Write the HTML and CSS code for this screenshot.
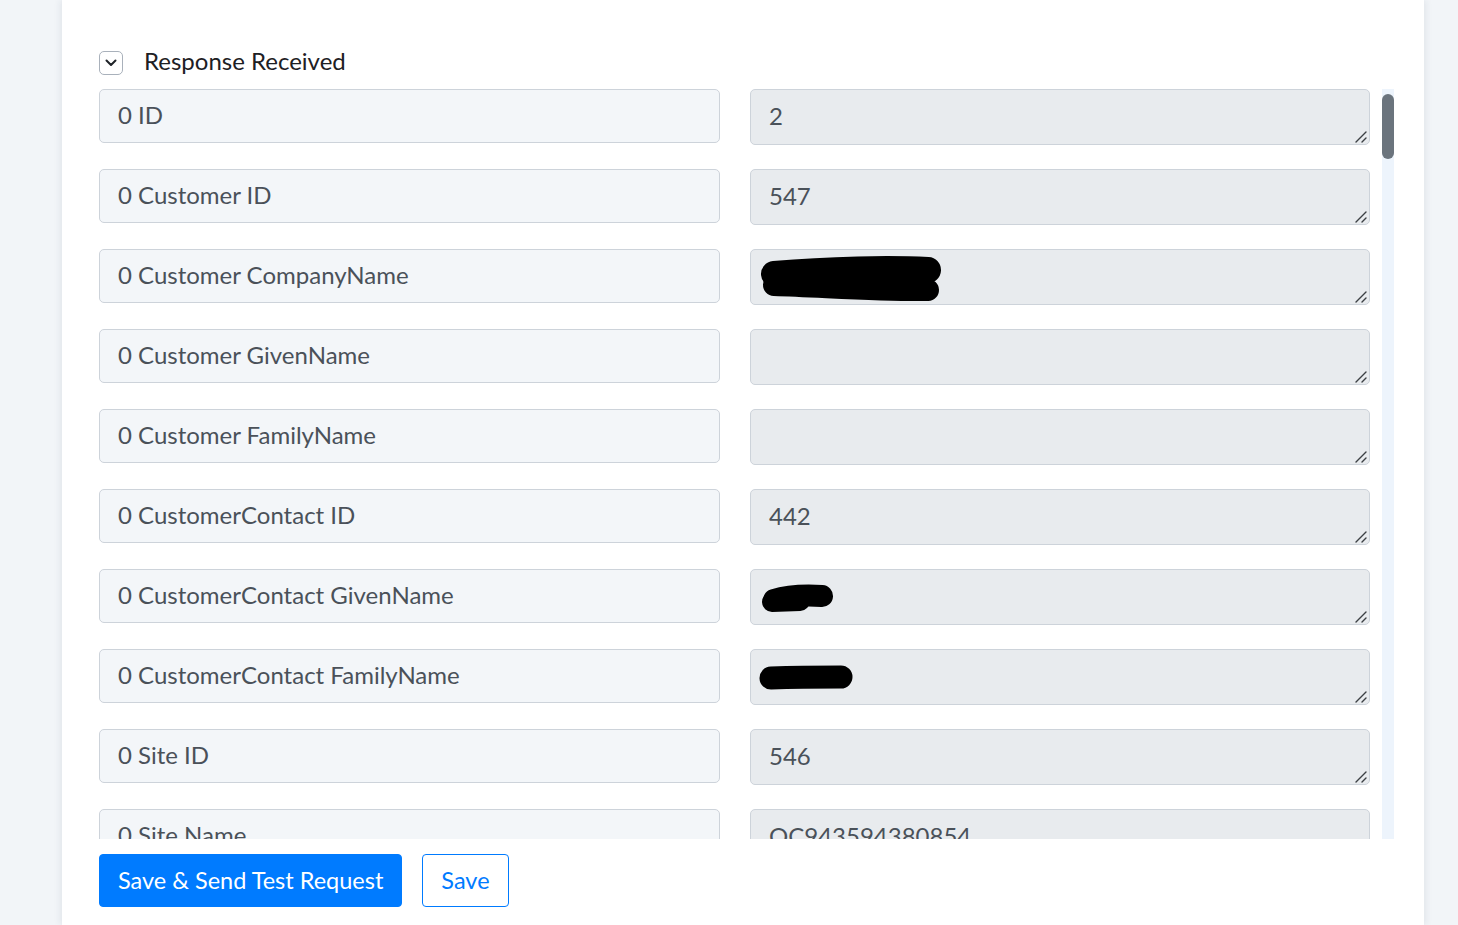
FILE: index.html
```html
<!DOCTYPE html>
<html lang="en">
<head>
    <meta charset="UTF-8">
    <meta name="viewport" content="width=device-width, initial-scale=1.0">
    <title>Response Received</title>
    <link rel="stylesheet" href="styles.css">
</head>
<body>

<div class="card">
    <div class="section-head">
        <button class="toggle" type="button">
            <svg width="12" height="8" viewBox="0 0 12 8"><path d="M1.5 1.5 L6 6 L10.5 1.5" fill="none" stroke="#1f2328" stroke-width="2" stroke-linecap="round" stroke-linejoin="round"/></svg>
        </button>
        <span class="section-title">Response Received</span>
    </div>

    <div class="fields-wrap">
        <div class="fields" id="fields"></div>
        <div class="scrollbar"><div class="thumb"></div></div>
    </div>

    <div class="actions">
        <button class="btn btn-primary" type="button">Save &amp; Send Test Request</button>
        <button class="btn btn-outline" type="button">Save</button>
    </div>
</div>

<script>
    const fields = document.getElementById('fields');

    // marker scribbles drawn over private values
    const scribbles = {
        wide: '<svg class="redact" width="200" height="60"><path d="M24 25 C80 20 140 19 178 21" stroke="#000" stroke-width="26" stroke-linecap="round" fill="none"/><path d="M24 36 C80 38 140 42 178 41" stroke="#000" stroke-width="22" stroke-linecap="round" fill="none"/></svg>',
        short: '<svg class="redact" width="100" height="60"><path d="M24 31 C40 26 56 26 72 27" stroke="#000" stroke-width="22" stroke-linecap="round" fill="none"/><path d="M22 33 L50 32" stroke="#000" stroke-width="20" stroke-linecap="round" fill="none"/></svg>',
        mid: '<svg class="redact" width="110" height="60"><path d="M21 29 C50 28 70 28 91 28" stroke="#000" stroke-width="23" stroke-linecap="round" fill="none"/></svg>'
    };

    const grip = '<svg class="grip" width="12" height="12" viewBox="0 0 12 12"><path d="M1 11 L11 1 M7 11 L11 7" stroke="#3c4044" stroke-width="1.4" stroke-linecap="round"/></svg>';

    const record = [
        ['ID', '2'],
        ['Customer ID', '547'],
        ['Customer CompanyName', '', 'wide'],
        ['Customer GivenName', ''],
        ['Customer FamilyName', ''],
        ['CustomerContact ID', '442'],
        ['CustomerContact GivenName', '', 'short'],
        ['CustomerContact FamilyName', '', 'mid'],
        ['Site ID', '546'],
        ['Site Name', 'QC943594380854'],
        ['Site Address1', ''],
        ['Site City', '']
    ];

    function addRow(label, value, redact) {
        const row = document.createElement('div');
        row.className = 'row';
        row.innerHTML =
            '<input class="key" type="text" readonly value="' + label + '">' +
            '<div class="cell"><textarea class="value" readonly>' + value + '</textarea>' +
            grip + (redact ? scribbles[redact] : '') + '</div>';
        fields.appendChild(row);
    }

    for (let i = 0; i < 9; i++) {
        record.forEach(function (f) {
            let value = f[1];
            if (i > 0 && /^\d+$/.test(value)) {
                value = String(Number(value) + i * 3);
            }
            addRow(i + ' ' + f[0], value, i === 0 ? f[2] : null);
        });
    }
</script>

</body>
</html>
```

FILE: styles.css
```css
body {
    margin: 0;
    background-color: #f2f5f8;
    font-family: Lato, "Open Sans", sans-serif;
    overflow: hidden;
}
.card {
    width: 1362px;
    min-height: 100vh;
    margin-left: 62px;
    padding: 51px 30px 0 37px;
    box-sizing: border-box;
    background-color: #fff;
    box-shadow: -3px 0 6px rgba(30, 50, 80, 0.06), 3px 0 6px rgba(30, 50, 80, 0.06);
}
.section-head {
    display: flex;
    align-items: center;
    gap: 21px;
    height: 24px;
    margin-bottom: 14px;
}
.toggle {
    width: 24px;
    height: 24px;
    padding: 0;
    display: flex;
    align-items: center;
    justify-content: center;
    border: 1px solid #a9b1bb;
    border-radius: 5px;
    background: #fff;
}
.section-title {
    margin-top: -6px;
    font-size: 24px;
    color: #1d2024;
}
.fields-wrap {
    display: flex;
    height: 750px;
}
.fields {
    flex: 1;
    overflow: hidden;
}
.scrollbar {
    width: 12px;
    background-color: #edf4fc;
}
.scrollbar .thumb {
    height: 65px;
    margin-top: 5px;
    border-radius: 6px;
    background-color: #6b747d;
}
.row {
    display: grid;
    grid-template-columns: 621px 620px;
    column-gap: 30px;
    align-items: start;
    margin-bottom: 24px;
}
.key, .value {
    font-family: inherit;
    font-size: 24px;
    color: #4a5159;
    border: 1px solid #cdd3da;
    border-radius: 5px;
    box-sizing: border-box;
    outline: none;
}
.key {
    height: 54px;
    padding: 0 18px 3px;
    background-color: #f3f6f9;
}
.cell {
    position: relative;
    height: 56px;
}
.value {
    display: block;
    width: 620px;
    height: 56px;
    padding: 9px 18px;
    line-height: 33px;
    background-color: #e8ebee;
    resize: none;
    overflow: hidden;
}
.grip {
    position: absolute;
    right: 3px;
    bottom: 2px;
}
.redact {
    position: absolute;
    left: 0;
    top: 0;
    pointer-events: none;
}
.actions {
    display: flex;
    gap: 20px;
    padding-top: 15px;
}
.btn {
    height: 53px;
    padding: 0 18px 2px;
    font-family: inherit;
    font-size: 23.5px;
    border-radius: 4px;
    cursor: pointer;
}
.btn-primary {
    border: 1px solid #007bff;
    background-color: #007bff;
    color: #fff;
}
.btn-outline {
    border: 1px solid #007bff;
    background-color: #fff;
    color: #007bff;
}
```
